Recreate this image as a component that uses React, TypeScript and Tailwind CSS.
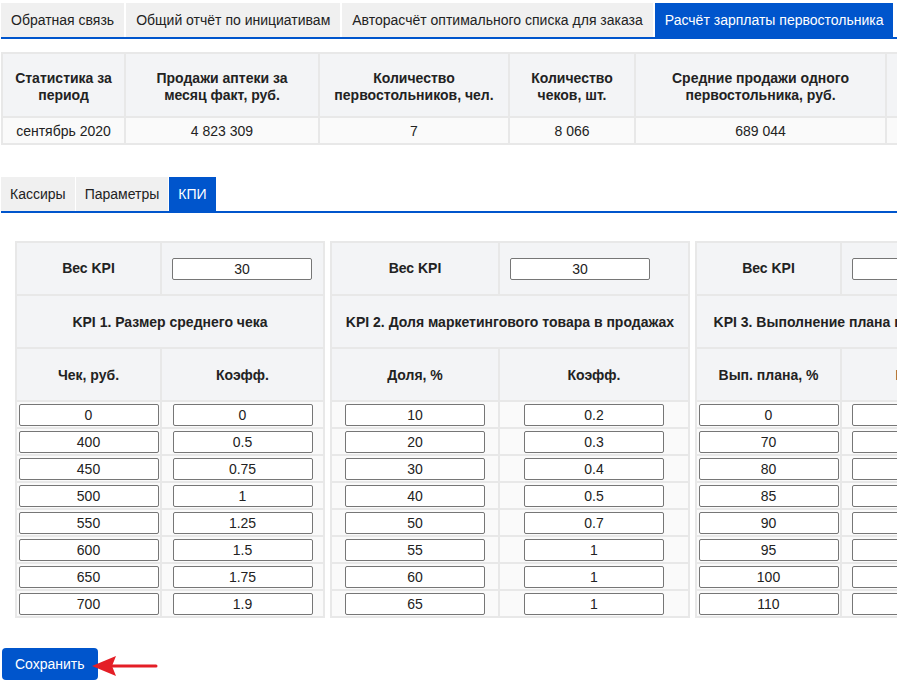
import React from "react";

const topTabs = [
  "Обратная связь",
  "Общий отчёт по инициативам",
  "Авторасчёт оптимального списка для заказа",
  "Расчёт зарплаты первостольника",
];

const subTabs = ["Кассиры", "Параметры", "КПИ"];

const statsHead = [
  "Статистика за период",
  "Продажи аптеки за месяц факт, руб.",
  "Количество первостольников, чел.",
  "Количество чеков, шт.",
  "Средние продажи одного первостольника, руб.",
  "Средний чек, руб.",
];

const statsRow = ["сентябрь 2020", "4 823 309", "7", "8 066", "689 044", "597"];

type Kpi = {
  cols: string;
  title: string;
  heads: [string, string];
  weight: string;
  rows: [string, string][];
};

const kpis: Kpi[] = [
  {
    cols: "grid-cols-[143px_161px]",
    title: "KPI 1. Размер среднего чека",
    heads: ["Чек, руб.", "Коэфф."],
    weight: "30",
    rows: [
      ["0", "0"],
      ["400", "0.5"],
      ["450", "0.75"],
      ["500", "1"],
      ["550", "1.25"],
      ["600", "1.5"],
      ["650", "1.75"],
      ["700", "1.9"],
    ],
  },
  {
    cols: "grid-cols-[166px_188px]",
    title: "KPI 2. Доля маркетингового товара в продажах",
    heads: ["Доля, %", "Коэфф."],
    weight: "30",
    rows: [
      ["10", "0.2"],
      ["20", "0.3"],
      ["30", "0.4"],
      ["40", "0.5"],
      ["50", "0.7"],
      ["55", "1"],
      ["60", "1"],
      ["65", "1"],
    ],
  },
  {
    cols: "grid-cols-[143px_160px]",
    title: "KPI 3. Выполнение плана по продажам",
    heads: ["Вып. плана, %", "Коэфф."],
    weight: "40",
    rows: [
      ["0", "0"],
      ["70", "0.5"],
      ["80", "0.7"],
      ["85", "0.8"],
      ["90", "0.9"],
      ["95", "1"],
      ["100", "1.1"],
      ["110", "1.2"],
    ],
  },
];

function Tabs({ items, active, pad, gap }: { items: string[]; active: number; pad: string; gap: string }) {
  return (
    <div className={`flex ${gap} border-b-2 border-[#0055cc]`}>
      {items.map((t, i) => (
        <div
          key={t}
          className={
            i === active
              ? `h-[34px] ${pad} flex items-center bg-[#0055cc] text-white whitespace-nowrap`
              : `h-[34px] ${pad} flex items-center bg-[#f0f0f0] text-[#222] whitespace-nowrap`
          }
        >
          {t}
        </div>
      ))}
    </div>
  );
}

function Field({ value }: { value: string }) {
  return (
    <input
      readOnly
      value={value}
      className="w-[140px] h-[22px] border border-[#767676] rounded-[2px] bg-white text-center text-[14px] text-[#222] outline-none"
    />
  );
}

function KpiPanel({ kpi }: { kpi: Kpi }) {
  return (
    <div className={`grid ${kpi.cols} gap-[2px] p-[2px] bg-[#e8e8e8] shrink-0`}>
      <div className="h-[51px] bg-[#f3f4f6] flex items-center justify-center font-bold">Вес KPI</div>
      <div className="h-[51px] bg-[#f3f4f6] flex items-center pl-[10px]">
        <Field value={kpi.weight} />
      </div>
      <div className="col-span-2 h-[51px] pt-[2px] bg-[#f3f4f6] flex items-center justify-center font-bold whitespace-nowrap px-[10px]">
        {kpi.title}
      </div>
      {kpi.heads.map((h) => (
        <div key={h} className="h-[51px] pt-[2px] bg-[#f3f4f6] flex items-center justify-center font-bold">
          {h}
        </div>
      ))}
      {kpi.rows.map((r, i) => (
        <React.Fragment key={i}>
          <div className="h-[25px] bg-[#fafafa] flex items-center justify-center">
            <Field value={r[0]} />
          </div>
          <div className="h-[25px] bg-[#fafafa] flex items-center justify-center">
            <Field value={r[1]} />
          </div>
        </React.Fragment>
      ))}
    </div>
  );
}

export default function App() {
  return (
    <div
      className="w-[897px] h-[682px] overflow-hidden bg-white pt-[3px] pl-[1px] text-[14px] text-[#222]"
      style={{ fontFamily: '"Liberation Sans", Arial, sans-serif' }}
    >
      <Tabs items={topTabs} active={3} pad="px-[10px]" gap="gap-[2px]" />

      <div className="mt-[13px] grid grid-cols-[121px_192px_188px_124px_249px_200px] gap-[2px] p-[2px] bg-[#e8e8e8] w-max">
        {statsHead.map((h) => (
          <div
            key={h}
            className="h-[62px] pt-[3px] bg-[#f3f4f6] flex items-center justify-center text-center font-bold leading-[17px] px-[10px]"
          >
            {h}
          </div>
        ))}
        {statsRow.map((v, i) => (
          <div key={i} className="h-[25px] pt-[1px] bg-[#fafafa] flex items-center justify-center">
            {v}
          </div>
        ))}
      </div>

      <div className="mt-[32px]">
        <Tabs items={subTabs} active={2} pad="px-[9px]" gap="gap-[1px]" />
      </div>

      <div className="mt-[28px] ml-[14px] flex gap-[5px] w-max">
        {kpis.map((k) => (
          <KpiPanel key={k.title} kpi={k} />
        ))}
      </div>

      <div className="relative mt-[30px] ml-[1px]">
        <button className="h-[32px] px-[13px] rounded-[4px] bg-[#0055cc] text-white text-[14px]">
          Сохранить
        </button>
        <svg
          className="absolute left-[87px] top-[5px]"
          width="72"
          height="26"
          viewBox="0 0 72 26"
          aria-hidden="true"
        >
          <line x1="22" y1="13" x2="67" y2="13" stroke="#e41e26" strokeWidth="3" strokeLinecap="round" />
          <polygon points="3,13 27,3 23,13 27,23" fill="#e41e26" />
        </svg>
      </div>
    </div>
  );
}
